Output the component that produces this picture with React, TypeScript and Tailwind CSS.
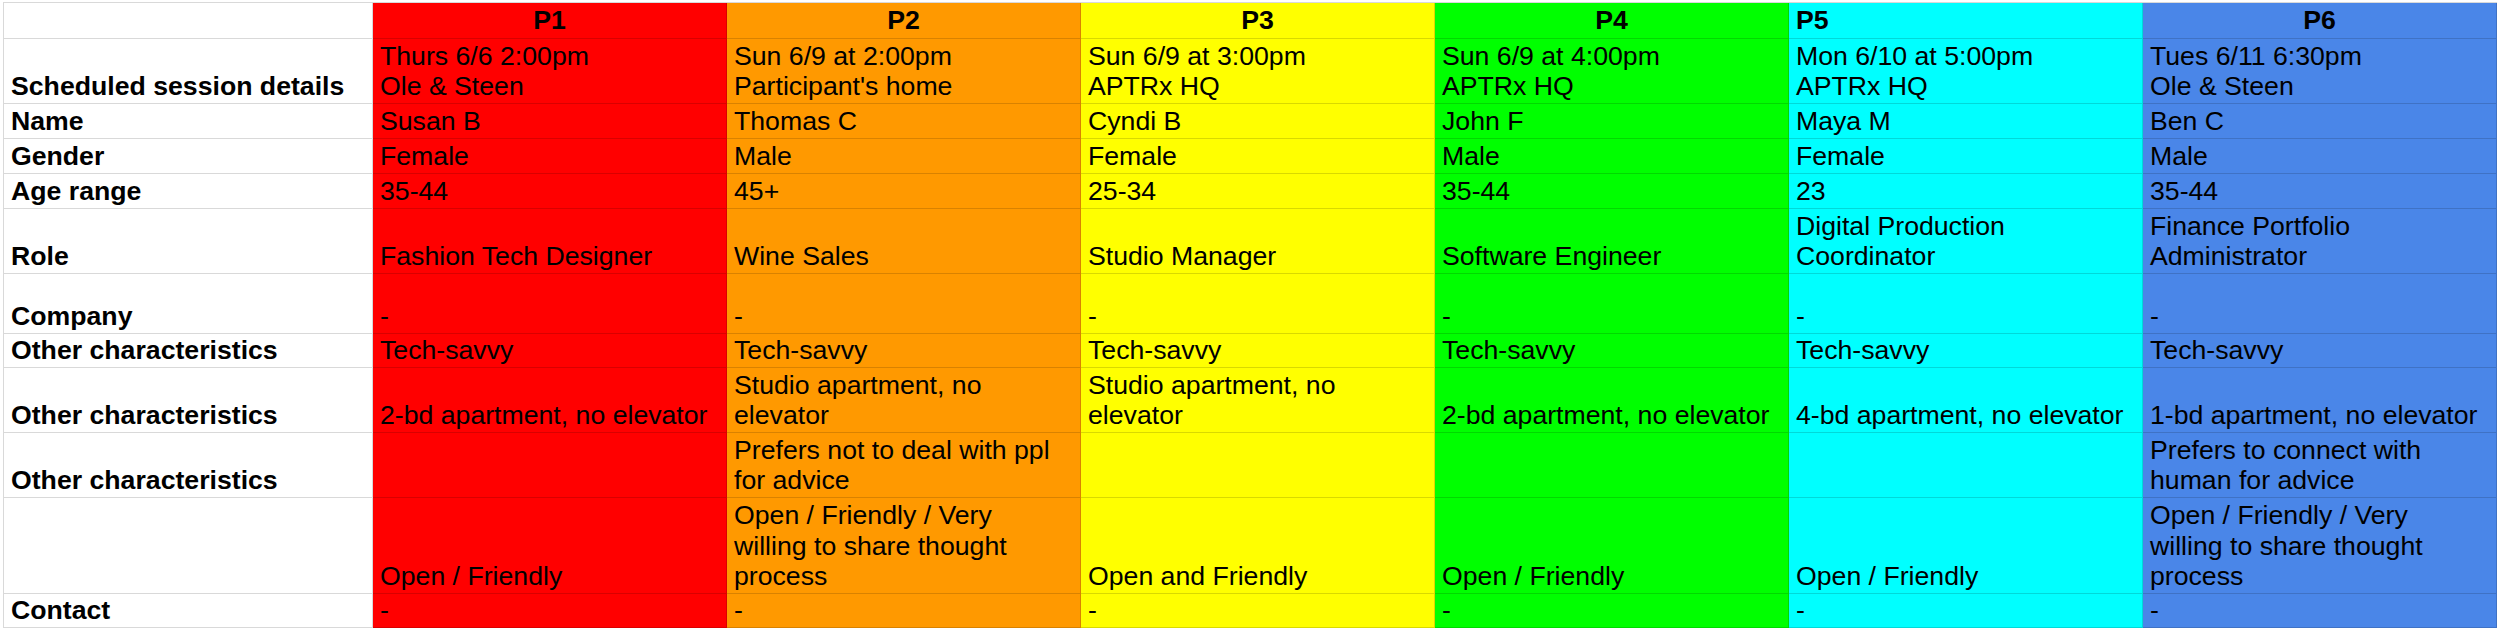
import React from "react";

type Col = { bg: string; head: string; headAlign: "center" | "left"; cells: string[] };

const labels = [
  "Scheduled session details",
  "Name",
  "Gender",
  "Age range",
  "Role",
  "Company",
  "Other characteristics",
  "Other characteristics",
  "Other characteristics",
  "",
  "Contact",
];

const rowHeights = ["h-[65px]", "h-[35px]", "h-[35px]", "h-[35px]", "h-[65px]", "h-[60px]", "h-[34px]", "h-[65px]", "h-[65px]", "h-[96px]", "h-[34px]"];

const cols: Col[] = [
  {
    bg: "bg-[#ff0000]",
    head: "P1",
    headAlign: "center",
    cells: [
      "Thurs 6/6 2:00pm\nOle & Steen",
      "Susan B",
      "Female",
      "35-44",
      "Fashion Tech Designer",
      "-",
      "Tech-savvy",
      "2-bd apartment, no elevator",
      "",
      "Open / Friendly",
      "-",
    ],
  },
  {
    bg: "bg-[#ff9900]",
    head: "P2",
    headAlign: "center",
    cells: [
      "Sun 6/9 at 2:00pm\nParticipant's home",
      "Thomas C",
      "Male",
      "45+",
      "Wine Sales",
      "-",
      "Tech-savvy",
      "Studio apartment, no\nelevator",
      "Prefers not to deal with ppl\nfor advice",
      "Open / Friendly / Very\nwilling to share thought\nprocess",
      "-",
    ],
  },
  {
    bg: "bg-[#ffff00]",
    head: "P3",
    headAlign: "center",
    cells: [
      "Sun 6/9 at 3:00pm\nAPTRx HQ",
      "Cyndi B",
      "Female",
      "25-34",
      "Studio Manager",
      "-",
      "Tech-savvy",
      "Studio apartment, no\nelevator",
      "",
      "Open and Friendly",
      "-",
    ],
  },
  {
    bg: "bg-[#00ff00]",
    head: "P4",
    headAlign: "center",
    cells: [
      "Sun 6/9 at 4:00pm\nAPTRx HQ",
      "John F",
      "Male",
      "35-44",
      "Software Engineer",
      "-",
      "Tech-savvy",
      "2-bd apartment, no elevator",
      "",
      "Open / Friendly",
      "-",
    ],
  },
  {
    bg: "bg-[#00ffff]",
    head: "P5",
    headAlign: "left",
    cells: [
      "Mon 6/10 at 5:00pm\nAPTRx HQ",
      "Maya M",
      "Female",
      "23",
      "Digital Production\nCoordinator",
      "-",
      "Tech-savvy",
      "4-bd apartment, no elevator",
      "",
      "Open / Friendly",
      "-",
    ],
  },
  {
    bg: "bg-[#4a86e8]",
    head: "P6",
    headAlign: "center",
    cells: [
      "Tues 6/11 6:30pm\nOle & Steen",
      "Ben C",
      "Male",
      "35-44",
      "Finance Portfolio\nAdministrator",
      "-",
      "Tech-savvy",
      "1-bd apartment, no elevator",
      "Prefers to connect with\nhuman for advice",
      "Open / Friendly / Very\nwilling to share thought\nprocess",
      "-",
    ],
  },
];

function Lines({ text }: { text: string }) {
  const parts = text.split("\n");
  return (
    <>
      {parts.map((p, i) => (
        <div key={i} className="whitespace-pre">
          {p}
        </div>
      ))}
    </>
  );
}

export default function App() {
  const cellBase =
    "flex flex-col justify-end overflow-hidden px-[7px] pb-[1px] border-r border-b border-[rgba(0,0,0,0.15)]";
  return (
    <div className="w-[2500px] h-[630px] bg-white pt-[2px] pl-[3px] text-black font-['Liberation_Sans',Arial,sans-serif] text-[26.67px] leading-[30.7px]">
      <div className="grid grid-cols-[369px_repeat(6,354px)] w-max border-l border-t border-[rgba(0,0,0,0.15)]">
        {/* header row */}
        <div className="h-[36px] border-r border-b border-[rgba(0,0,0,0.15)]" />
        {cols.map((c) => (
          <div
            key={c.head}
            className={`h-[36px] flex flex-col justify-center px-[7px] font-bold border-r border-b border-[rgba(0,0,0,0.15)] ${c.bg} ${
              c.headAlign === "center" ? "items-center" : "items-start"
            }`}
          >
            {c.head}
          </div>
        ))}
        {labels.map((label, r) => (
          <React.Fragment key={r}>
            <div className={`${cellBase} ${rowHeights[r]} font-bold bg-white`}>
              <Lines text={label} />
            </div>
            {cols.map((c) => (
              <div key={c.head + r} className={`${cellBase} ${rowHeights[r]} ${c.bg}`}>
                <Lines text={c.cells[r]} />
              </div>
            ))}
          </React.Fragment>
        ))}
      </div>
    </div>
  );
}
